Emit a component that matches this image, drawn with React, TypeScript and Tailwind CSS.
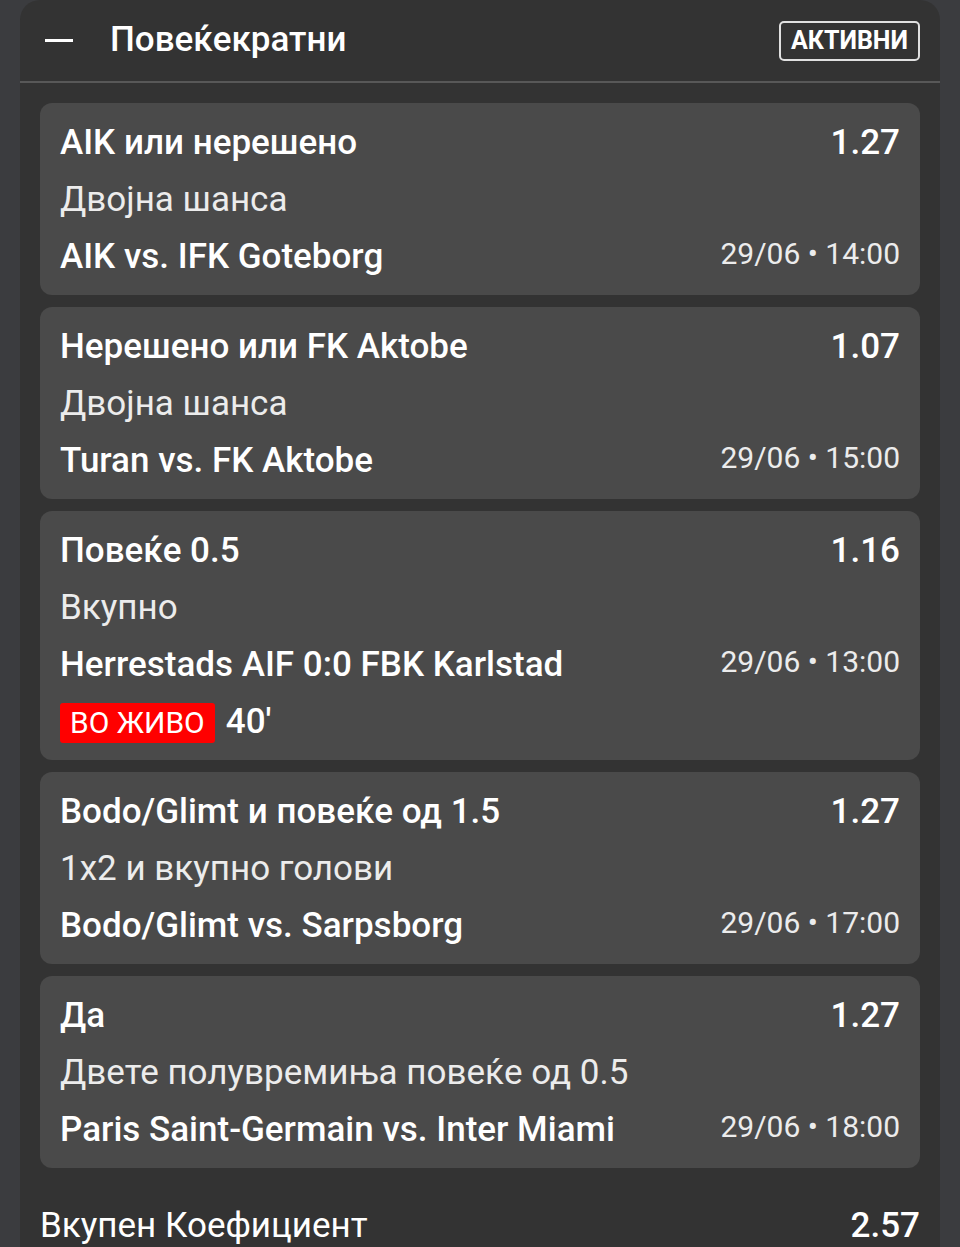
import { Fragment } from 'react'

interface Bet {
  pick: string
  market: string
  match: string
  odds: string
  date: string
  live?: string
}

const BETS: Bet[] = [
  { pick: 'AIK или нерешено', market: 'Двојна шанса', match: 'AIK vs. IFK Goteborg', odds: '1.27', date: '29/06 • 14:00' },
  { pick: 'Нерешено или FK Aktobe', market: 'Двојна шанса', match: 'Turan vs. FK Aktobe', odds: '1.07', date: '29/06 • 15:00' },
  { pick: 'Повеќе 0.5', market: 'Вкупно', match: 'Herrestads AIF 0:0 FBK Karlstad', odds: '1.16', date: '29/06 • 13:00', live: "40'" },
  { pick: 'Bodo/Glimt и повеќе од 1.5', market: '1x2 и вкупно голови', match: 'Bodo/Glimt vs. Sarpsborg', odds: '1.27', date: '29/06 • 17:00' },
  { pick: 'Да', market: 'Двете полувремиња повеќе од 0.5', match: 'Paris Saint-Germain vs. Inter Miami', odds: '1.27', date: '29/06 • 18:00' },
]

function BetCard({ bet }: { bet: Bet }) {
  return (
    <div className="rounded-xl bg-[#4a4a4a] px-5 pt-[12px] pb-[9px] text-white">
      <div className="flex h-[57px] items-center justify-between">
        <span className="text-[35px] font-medium">{bet.pick}</span>
        <span className="text-[35px] font-medium">{bet.odds}</span>
      </div>
      <div className="flex h-[57px] items-center">
        <span className="text-[35px] text-[#ececec]">{bet.market}</span>
      </div>
      <div className="flex h-[57px] items-center justify-between">
        <span className="text-[35px] font-medium">{bet.match}</span>
        <span className="mb-[8px] text-[30px] text-[#ececec]">{bet.date}</span>
      </div>
      {bet.live && (
        <div className="flex h-[57px] items-center gap-[11px]">
          <span className="rounded-[3px] bg-[#ff0000] px-[10px] text-[30px] leading-[40px]">ВО ЖИВО</span>
          <span className="text-[35px] font-medium">{bet.live}</span>
        </div>
      )}
    </div>
  )
}

export default function App() {
  return (
    <div
      className="min-h-[1247px] overflow-hidden bg-[#3b3c3f] px-5"
      style={{ fontFamily: 'Roboto, "Noto Sans", sans-serif' }}
    >
      <div className="min-h-[1247px] rounded-t-[20px] bg-[#333333]">
        <div className="flex h-[81px] items-center justify-between pl-[25px] pr-5">
          <div className="flex items-center gap-[37px]">
            <span className="block h-[3px] w-[28px] bg-white" />
            <span className="text-[35px] font-medium text-white">Повеќекратни</span>
          </div>
          <span className="rounded-[5px] border-2 border-[#e0e0e0] px-[10px] text-[25px] font-bold leading-[36px] text-white">
            АКТИВНИ
          </span>
        </div>
        <div className="h-[2px] bg-[#585858]" />
        <div className="flex flex-col gap-3 px-5 pt-5">
          {BETS.map((b, i) => (
            <Fragment key={i}>
              <BetCard bet={b} />
            </Fragment>
          ))}
        </div>
        <div className="flex h-[41px] items-center justify-between mt-[38px] px-5 text-white">
          <span className="text-[35px]">Вкупен Коефициент</span>
          <span className="text-[35px] font-medium">2.57</span>
        </div>
      </div>
    </div>
  )
}
